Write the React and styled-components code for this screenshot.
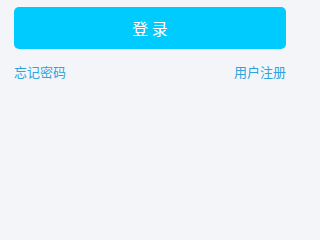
import React from 'react'
import styled, {createGlobalStyle} from 'styled-components'

const GlobalStyle = createGlobalStyle`
  html, body {
    margin: 0;
    padding: 0;
    background: #f4f5f9;
  }
  body {
    font-family: "Noto Sans CJK SC", "Noto Sans", sans-serif;
  }
`;

const Page = styled.div`
  width: 300px;
  height: 200px;
  padding: 7px 14px 0;
  box-sizing: border-box;
`;

const LoginButton = styled.button`
  display: block;
  width: 100%;
  height: 42px;
  border: none;
  border-radius: 5px;
  background: #00cbfe;
  color: #ffffff;
  font-family: inherit;
  font-size: 16px;
  line-height: 42px;
  padding: 0;
  white-space: pre;
`;

const Links = styled.div`
  display: flex;
  justify-content: space-between;
  margin-top: 14px;
`;

const TextLink = styled.a`
  color: #2fa3dc;
  font-size: 13px;
  line-height: 18px;
  text-decoration: none;
`;

export default function App() {
  return (
    <>
      <GlobalStyle />
      <Page>
        <LoginButton>登 录</LoginButton>
        <Links>
          <TextLink href="#">忘记密码</TextLink>
          <TextLink href="#">用户注册</TextLink>
        </Links>
      </Page>
    </>
  )
}
